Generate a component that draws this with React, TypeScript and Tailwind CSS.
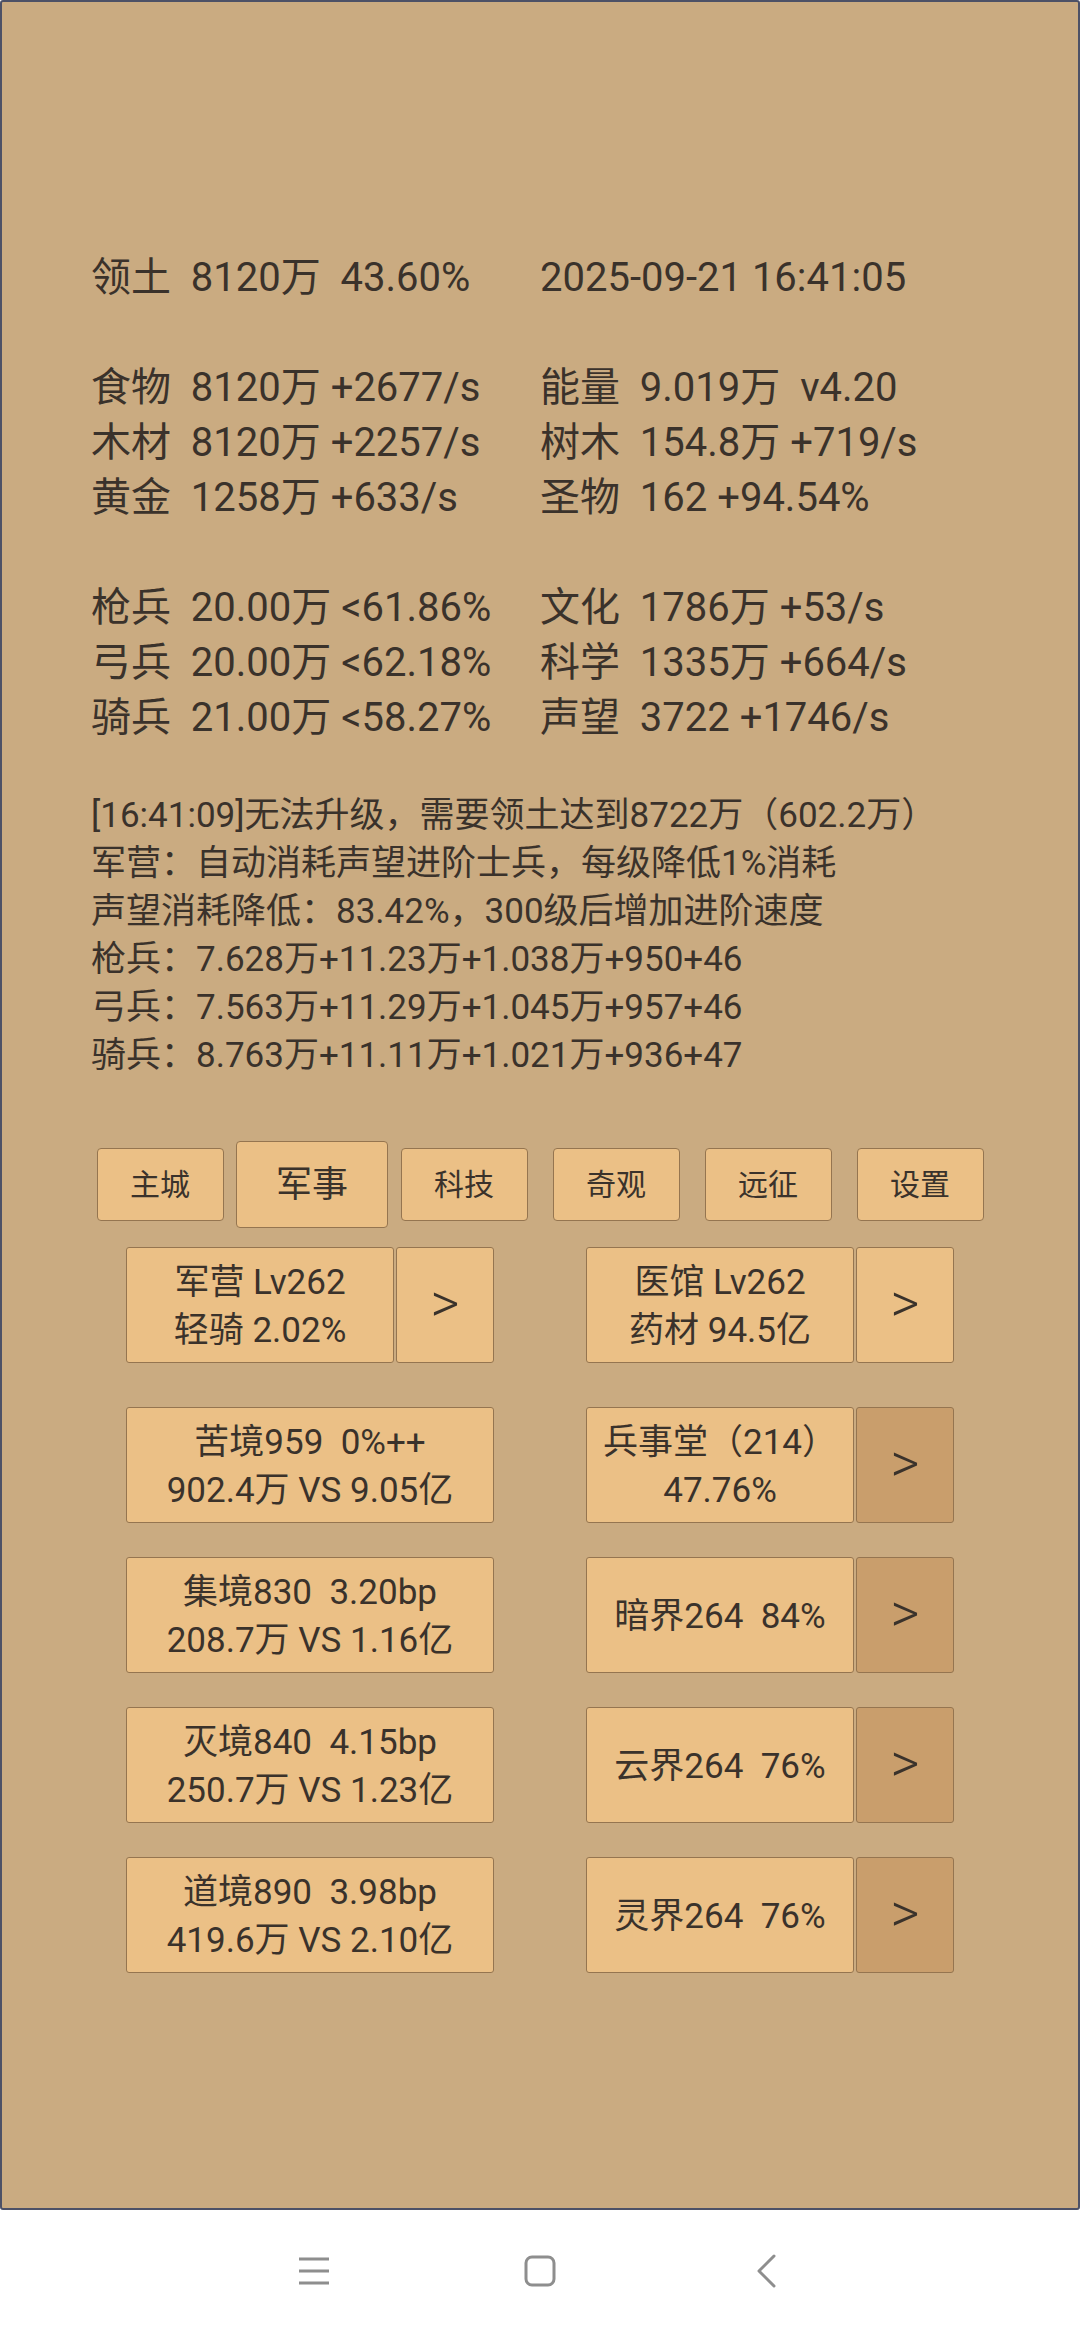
import React from 'react';

const FONT = "font-['Roboto','Noto_Sans_CJK_SC',sans-serif]";

// left / right column of the stats block; null = empty line
const STATS: ([string, string] | null)[] = [
  ['领土  8120万  43.60%', '2025-09-21 16:41:05'],
  null,
  ['食物  8120万 +2677/s', '能量  9.019万  v4.20'],
  ['木材  8120万 +2257/s', '树木  154.8万 +719/s'],
  ['黄金  1258万 +633/s', '圣物  162 +94.54%'],
  null,
  ['枪兵  20.00万 <61.86%', '文化  1786万 +53/s'],
  ['弓兵  20.00万 <62.18%', '科学  1335万 +664/s'],
  ['骑兵  21.00万 <58.27%', '声望  3722 +1746/s'],
];

const LOG = [
  '[16:41:09]无法升级，需要领土达到8722万（602.2万）',
  '军营：自动消耗声望进阶士兵，每级降低1%消耗',
  '声望消耗降低：83.42%，300级后增加进阶速度',
  '枪兵：7.628万+11.23万+1.038万+950+46',
  '弓兵：7.563万+11.29万+1.045万+957+46',
  '骑兵：8.763万+11.11万+1.021万+936+47',
];

const TABS = ['主城', '军事', '科技', '奇观', '远征', '设置'];

const ROWS = [
  { left: ['苦境959  0%++', '902.4万 VS 9.05亿'], right: ['兵事堂（214）', '47.76%'] },
  { left: ['集境830  3.20bp', '208.7万 VS 1.16亿'], right: ['暗界264  84%'] },
  { left: ['灭境840  4.15bp', '250.7万 VS 1.23亿'], right: ['云界264  76%'] },
  { left: ['道境890  3.98bp', '419.6万 VS 2.10亿'], right: ['灵界264  76%'] },
];

function Box({ lines, className }: { lines: string[]; className: string }) {
  return (
    <div className={`h-[116px] pt-[4px] flex flex-col items-center justify-center border border-[#957550] rounded-[3px] bg-[#ebc086] text-[35px] leading-[48px] whitespace-pre ${className}`}>
      {lines.map((l, i) => <div key={i}>{l}</div>)}
    </div>
  );
}

function Arrow({ dark }: { dark?: boolean }) {
  return (
    <div className={`w-[98px] h-[116px] flex items-center justify-center border border-[#957550] rounded-[3px] text-[56px] font-light leading-none pb-[4px] ${dark ? 'bg-[#c99e6c]' : 'bg-[#ebc086]'}`}>
      &gt;
    </div>
  );
}

export default function App() {
  return (
    <div className={`w-[1080px] h-[2340px] flex flex-col bg-white text-[#3a322b] ${FONT}`}>
      <div className="h-[2210px] border-2 border-[#4d5166] rounded-[3px] bg-[#caab81] pt-[248px]">
        {/* stats */}
        <div className="pl-[89px] grid grid-cols-[449px_1fr] text-[40px] leading-[55px] whitespace-pre">
          {STATS.map((r, i) => r ? (
            <React.Fragment key={i}>
              <div>{r[0]}</div>
              <div>{r[1]}</div>
            </React.Fragment>
          ) : (
            <div key={i} className="col-span-2 h-[55px]" />
          ))}
        </div>

        {/* log */}
        <div className="pl-[89px] mt-[47px] text-[35px] leading-[48px] whitespace-pre">
          {LOG.map((l, i) => <div key={i}>{l}</div>)}
        </div>

        {/* tabs */}
        <div className="mt-[61px] mx-auto w-[912px] h-[87px] grid grid-cols-6 items-center">
          {TABS.map((t, i) => (
            <div key={t} className="flex justify-center">
              {i === 1 ? (
                <div className="w-[152px] h-[87px] flex items-center justify-center border border-[#957550] rounded-[4px] bg-[#ebc086] text-[36px]">{t}</div>
              ) : (
                <div className="w-[127px] h-[73px] flex items-center justify-center border border-[#957550] rounded-[4px] bg-[#ebc086] text-[30px]">{t}</div>
              )}
            </div>
          ))}
        </div>

        {/* buildings */}
        <div className="mt-[19px] pl-[124px] flex flex-col">
          <div className="flex gap-[92px]">
            <div className="flex gap-[2px]">
              <Box lines={['军营 Lv262', '轻骑 2.02%']} className="w-[268px]" />
              <Arrow />
            </div>
            <div className="flex gap-[2px]">
              <Box lines={['医馆 Lv262', '药材 94.5亿']} className="w-[268px]" />
              <Arrow />
            </div>
          </div>
          {ROWS.map((r, i) => (
            <div key={i} className={`flex gap-[92px] ${i === 0 ? 'mt-[44px]' : 'mt-[34px]'}`}>
              <Box lines={r.left} className="w-[368px]" />
              <div className="flex gap-[2px]">
                <Box lines={r.right} className="w-[268px]" />
                <Arrow dark />
              </div>
            </div>
          ))}
        </div>
      </div>

      {/* system nav bar */}
      <div className="flex-1 flex items-center justify-center pb-[8px] text-[#8e8e8e]">
        <div className="w-[678px] grid grid-cols-3 items-center justify-items-center">
          <svg width="32" height="30" viewBox="0 0 32 30" fill="none" stroke="currentColor" strokeWidth="3">
            <path d="M1 3h30M1 15h30M1 27h30" />
          </svg>
          <svg width="32" height="32" viewBox="0 0 32 32" fill="none" stroke="currentColor" strokeWidth="3">
            <rect x="2" y="2" width="28" height="28" rx="6" />
          </svg>
          <svg width="22" height="34" viewBox="0 0 22 34" fill="none" stroke="currentColor" strokeWidth="3" strokeLinecap="round" strokeLinejoin="round">
            <path d="M19 2L4 17l15 15" />
          </svg>
        </div>
      </div>
    </div>
  );
}
